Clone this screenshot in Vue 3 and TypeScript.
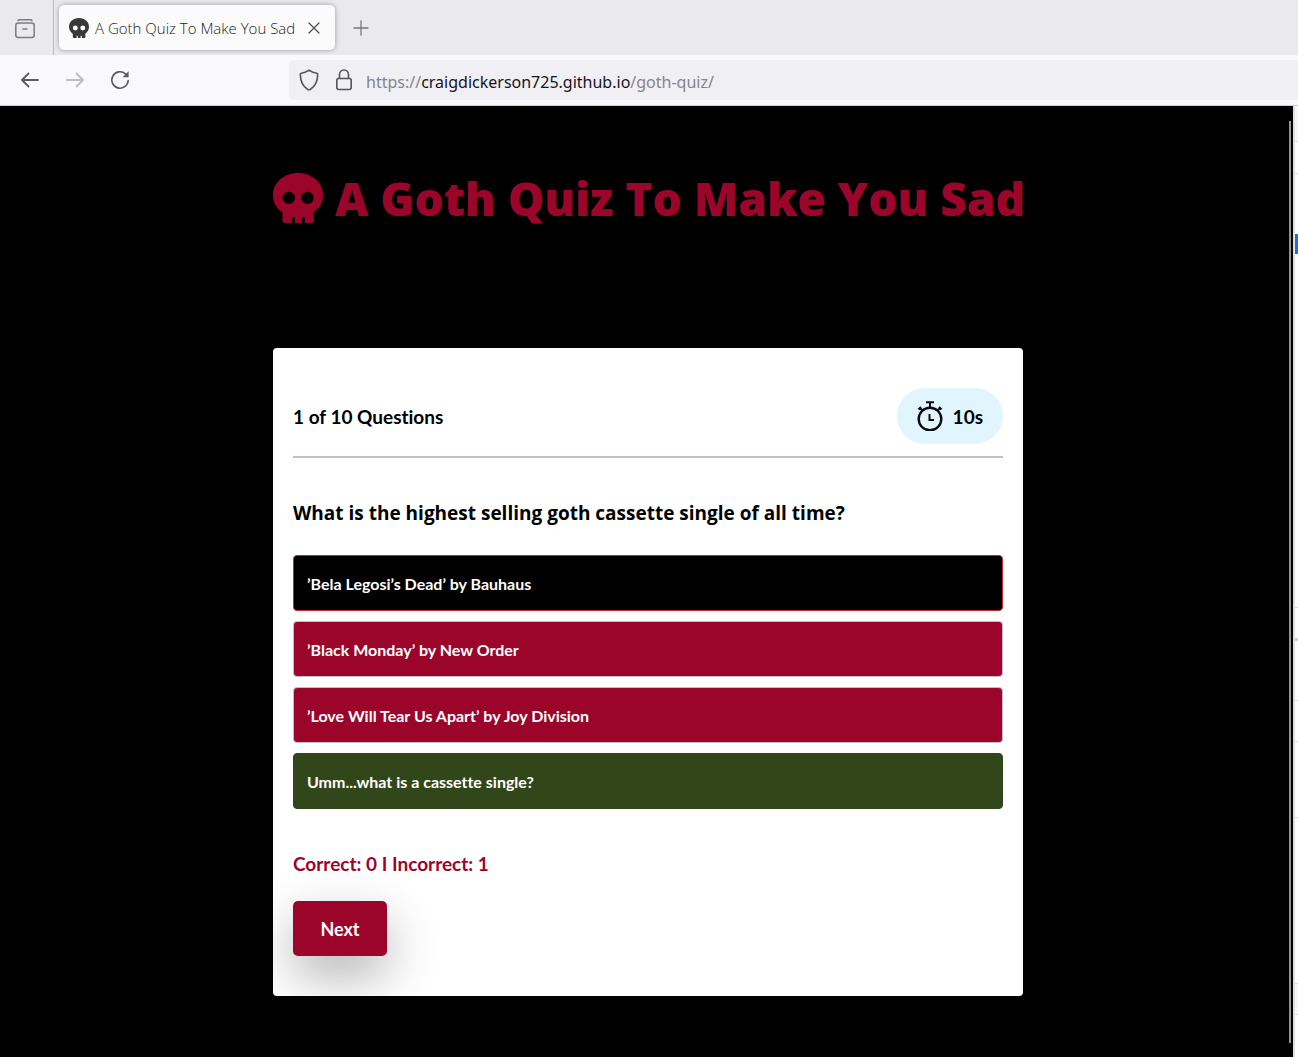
<script setup lang="ts">
import { ref } from 'vue'

interface Option {
  text: string
  state: 'picked' | 'wrong' | 'right'
}

const title = 'A Goth Quiz To Make You Sad'
const url = ref('https://craigdickerson725.github.io/goth-quiz/')
const options: Option[] = [
  { text: '’Bela Legosi’s Dead’ by Bauhaus', state: 'picked' },
  { text: '’Black Monday’ by New Order', state: 'wrong' },
  { text: '’Love Will Tear Us Apart’ by Joy Division', state: 'wrong' },
  { text: 'Umm...what is a cassette single?', state: 'right' },
]
const skull =
  'M25 0C39 0 50 9.500 50 22C50 29 47 35 41.500 38.500Q40.500 39.200 40.700 41L41 47Q41 50 38 50H32V45Q32 44.300 31.200 44.300H29.800Q29 44.300 29 45V50H22V45Q22 44.300 21.200 44.300H19.800Q19 44.300 19 45V50H12.500Q9.500 50 9.500 47L9.600 41Q9.600 39.200 8.500 38.500C3 35 0 29 0 22C0 9.500 11 0 25 0ZM15.800 18.700A6.200 6.200 0 1 0 15.800 31.100A6.200 6.200 0 1 0 15.800 18.700ZM34.500 18.700A6.200 6.200 0 1 0 34.500 31.100A6.200 6.200 0 1 0 34.500 18.700Z'
</script>

<template>
  <div class="window">
    <header class="tabs">
      <button class="recent" aria-label="Recent browsing">
        <svg width="20" height="20" viewBox="0 0 20 20" fill="none" stroke="#7c7b84" stroke-width="1.5" stroke-linecap="round">
          <path d="M3 1.6Q3.4.8 4.500.8H15.500Q16.600.8 17 1.600" />
          <rect x=".8" y="4" width="18.400" height="14.600" rx="2.500" />
          <path d="M8 10h4" />
        </svg>
      </button>
      <div class="tab">
        <svg class="favicon" width="20" height="20" viewBox="0 0 50 50" fill="#38383a" fill-rule="evenodd"><path :d="skull" /></svg>
        <span class="tab-title">{{ title }}</span>
        <button class="icon-button" aria-label="Close tab">
          <svg width="12" height="12" viewBox="0 0 12 12" stroke="#4a4a50" stroke-width="1.2" stroke-linecap="round"><path d="M1 1l10 10M11 1L1 11" /></svg>
        </button>
      </div>
      <button class="icon-button new-tab" aria-label="New tab">
        <svg width="16" height="16" viewBox="0 0 16 16" stroke="#77767f" stroke-width="1.3" stroke-linecap="round"><path d="M8 1v14M1 8h14" /></svg>
      </button>
    </header>

    <nav class="toolbar">
      <div class="controls">
        <button class="icon-button" aria-label="Back">
          <svg width="20" height="20" viewBox="0 0 20 20" fill="none" stroke="#5b5a66" stroke-width="1.8" stroke-linecap="round" stroke-linejoin="round"><path d="M18 10H2M8.500 3.500L2 10l6.500 6.500" /></svg>
        </button>
        <button class="icon-button" aria-label="Forward" disabled>
          <svg width="20" height="20" viewBox="0 0 20 20" fill="none" stroke="#bdbcc3" stroke-width="1.8" stroke-linecap="round" stroke-linejoin="round"><path d="M2 10H18M11.500 3.500L18 10l-6.500 6.500" /></svg>
        </button>
        <button class="icon-button" aria-label="Reload">
          <svg width="20" height="20" viewBox="0 0 20 20" fill="none" stroke="#5b5a66" stroke-width="1.6" stroke-linecap="round"><path d="M18.200 10.500A8.200 8.200 0 1 1 15.500 3.900L17 5.300" /><path d="M18.600 1.200V7.200H12.600Z" fill="#5b5a66" stroke="none" /></svg>
        </button>
      </div>
      <div class="address">
        <svg width="20" height="22" viewBox="0 0 20 22" fill="none" stroke="#55545d" stroke-width="1.600" stroke-linejoin="round"><path d="M10 1.200C7.500 3 4.500 4 2.200 4.300Q1.200 4.500 1.300 5.600C1.500 13 3.500 17.500 8.800 20.500Q10 21.100 11.200 20.500C16.500 17.500 18.500 13 18.700 5.600Q18.800 4.500 17.800 4.300C15.500 4 12.500 3 10 1.200Z" /></svg>
        <svg width="18" height="22" viewBox="0 0 18 22" fill="none" stroke="#55545d" stroke-width="1.600"><rect x="1.800" y="9.500" width="14.400" height="11" rx="2" /><path d="M4.500 9.500V5.500a4.500 4.500 0 0 1 9 0v4" /></svg>
        <a class="url" :href="url"><span>https://</span>craigdickerson725.github.io<span>/goth-quiz/</span></a>
      </div>
    </nav>

    <div class="viewport">
      <main class="page">
        <h1 class="heading">
          <svg width="50" height="50" viewBox="0 0 50 50" fill="#9b0529" fill-rule="evenodd"><path :d="skull" /></svg>
          <span>{{ title }}</span>
        </h1>
        <section class="card">
          <div class="card-top">
            <span class="progress">1 of 10 Questions</span>
            <div class="timer">
              <svg width="26" height="30" viewBox="0 0 26 30" fill="none" stroke="#0a0a0a" stroke-width="2.400">
                <circle cx="13" cy="18" r="11.300" />
                <path d="M9 1.200h8M13 1v6M2.500 6.500l3 3M1.500 8.500l2.500-2.500M23.500 6.500l-3 3M24.500 8.500l-2.500-2.500" stroke-width="2" />
                <path d="M12.500 13v6H17" stroke-width="2" />
              </svg>
              <span>10s</span>
            </div>
          </div>
          <h2 class="question">What is the highest selling goth cassette single of all time?</h2>
          <div class="options">
            <button v-for="option in options" :key="option.text" class="option" :class="option.state">{{ option.text }}</button>
          </div>
          <p class="score">Correct: 0 I Incorrect: 1</p>
          <button class="next">Next</button>
        </section>
      </main>
      <div class="scroll"><div class="thumb"></div></div>
      <aside class="edge">
        <div class="cell first"></div>
        <div class="cell second"></div>
        <div class="cell third"><div class="mark"></div></div>
        <div class="cell fourth"></div>
        <div class="cell fifth"></div>
        <div class="cell sixth"></div>
        <div class="cell seventh"></div>
        <div class="cell eighth"></div>
        <div class="cell ninth"></div>
      </aside>
    </div>
  </div>
</template>

<style>
body {
  margin: 0;
}
</style>

<style scoped>
* {
  box-sizing: border-box;
}
.window {
  display: flex;
  flex-direction: column;
  min-height: 100vh;
  font-family: Lato, sans-serif;
  font-variant-ligatures: none;
}
button {
  border: 0;
  margin: 0;
  padding: 0;
  font-family: inherit;
  font-variant-ligatures: none;
  cursor: pointer;
}
svg {
  display: block;
  flex: none;
}
.icon-button {
  background: none;
}
.tabs {
  display: flex;
  align-items: center;
  height: 55px;
  background: #eae9ee;
}
.recent {
  display: flex;
  align-items: center;
  align-self: stretch;
  width: 54px;
  padding-left: 15px;
  padding-top: 2px;
  background: none;
  border-right: 1px solid #bcbbc2;
}
.tab {
  display: flex;
  align-items: center;
  width: 276px;
  height: 45px;
  margin-left: 5px;
  padding: 0 15px 0 10px;
  background: #fbfbfb;
  border-radius: 5px;
  box-shadow: 0 0 5px rgba(0, 0, 0, 0.35);
}
.tab-title {
  flex: 1;
  margin-left: 6px;
  font: 300 15px/24px "Open Sans", sans-serif;
  color: #1c1c20;
  white-space: nowrap;
}
.new-tab {
  margin-left: 18px;
}
.toolbar {
  display: flex;
  align-items: center;
  height: 51px;
  background: #f9f9fb;
  border-bottom: 1px solid #cccccf;
}
.controls {
  display: flex;
  gap: 25px;
  width: 289px;
  padding-left: 20px;
}
.address {
  display: flex;
  align-items: center;
  flex: 1;
  height: 40px;
  padding-left: 10px;
  background: #f0eff4;
  border-radius: 5px 0 0 5px;
}
.address svg + svg {
  margin-left: 16px;
}
.url {
  margin-left: 13px;
  padding-top: 3px;
  font: 400 16px/24px "Noto Sans", sans-serif;
  color: #15141a;
  text-decoration: none;
}
.url span {
  color: #85848b;
}
.viewport {
  display: flex;
  flex: 1;
  background: #000;
}
.page {
  display: flex;
  flex-direction: column;
  align-items: center;
  flex: 1;
  padding: 62px 0 61px 7px;
}
.heading {
  display: flex;
  align-items: center;
  gap: 12px;
  width: 100%;
  max-width: 750px;
  margin: 0 0 120px;
  font-family: "Open Sans", sans-serif;
  font-size: 46px;
  line-height: 60px;
  font-weight: 800;
  color: #9b0529;
  white-space: nowrap;
}
.card {
  width: 100%;
  max-width: 750px;
  padding: 40px 20px;
  background: #fff;
  border-radius: 4px;
  overflow: hidden;
}
.card-top {
  display: flex;
  justify-content: space-between;
  align-items: center;
  padding-bottom: 12px;
  border-bottom: 2px solid #c0bdd0;
  font-size: 19px;
  line-height: 28px;
  font-weight: 700;
  color: #000;
}
.progress,
.timer span {
  padding-top: 2px;
}
.timer {
  display: flex;
  align-items: center;
  gap: 10px;
  height: 56px;
  padding: 0 20px;
  background: #e1f5fe;
  border-radius: 28px;
}
.question {
  margin: 40px 0 27px;
  font-family: "Open Sans", sans-serif;
  font-size: 19px;
  line-height: 30px;
  font-weight: 700;
  color: #000;
}
.options {
  display: flex;
  flex-direction: column;
  gap: 10px;
}
.option {
  height: 56px;
  padding: 2px 13px 0;
  border: 1px solid #c0bdd0;
  border-radius: 4px;
  background: #9b0529;
  font-size: 16px;
  line-height: 24px;
  font-weight: 700;
  color: #fff;
  text-align: left;
}
.picked {
  background: #000;
  border-color: #c62828;
}
.right {
  background: #31471a;
  border-color: #31471a;
}
.score {
  margin: 40px 0 22px;
  font-size: 19px;
  line-height: 30px;
  font-weight: 700;
  color: #9b0529;
}
.next {
  display: block;
  width: 94px;
  height: 55px;
  background: #9b0529;
  border-radius: 5px;
  box-shadow: 0 20px 50px rgba(0, 0, 0, 0.3);
  font-size: 18px;
  font-weight: 700;
  color: #fff;
}
.scroll {
  display: flex;
  width: 4px;
  padding: 15px 2px 14px 0;
}
.thumb {
  width: 2px;
  background: #919191;
}
.edge {
  display: flex;
  flex-direction: column;
  width: 5px;
  border-left: 2px solid #dfdfe1;
  background: #fff;
}
.cell {
  border-bottom: 1px solid #dcdcde;
}
.first {
  height: 36px;
  background: #f8f8f8;
}
.second {
  height: 32px;
}
.third {
  height: 434px;
  padding-top: 60px;
}
.mark {
  height: 20px;
  background: #0a78e6;
}
.fourth {
  height: 33px;
  border-bottom: 3px solid #d0cfd8;
}
.fifth {
  height: 60px;
}
.sixth {
  height: 41px;
}
.seventh {
  height: 76px;
}
.eighth {
  height: 166px;
}
.ninth {
  height: 31px;
  background: #f8f8f8;
}
</style>
